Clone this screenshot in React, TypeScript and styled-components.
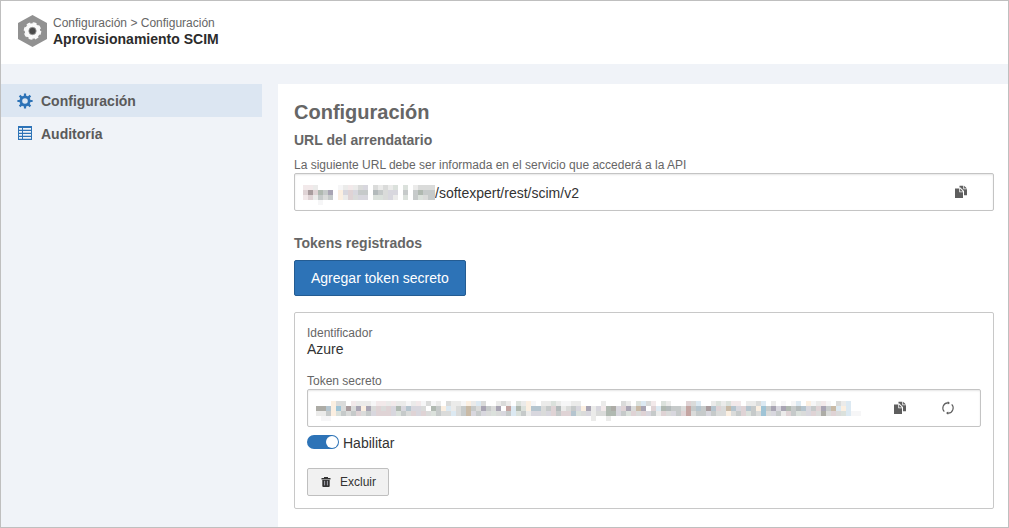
import React, { useState } from 'react';
import styled, { createGlobalStyle } from 'styled-components';

const GlobalStyle = createGlobalStyle`
  *, *::before, *::after { box-sizing: border-box; }
  body {
    margin: 0;
    font-family: 'Liberation Sans', Arial, sans-serif;
    font-size: 14px;
    line-height: 16px;
    color: #333;
    background: #f0f3f8;
  }
  h1, h2, h3, p { margin: 0; }
  button, input { font-family: inherit; }
`;

const Page = styled.div`
  display: flex;
  flex-direction: column;
  min-height: 100vh;
  border: 1px solid #bfbfbf;
`;

const Header = styled.header`
  display: flex;
  align-items: center;
  gap: 6px;
  padding: 14px 17px 17px;
  background: #fff;
`;

const Breadcrumb = styled.nav`
  font-size: 12px;
  color: #666;
  a { color: inherit; text-decoration: none; }
`;

const PageTitle = styled.h1`
  font-size: 14px;
  line-height: 16px;
  color: #2b2b2b;
`;

const Body = styled.div`
  display: flex;
  flex: 1;
  gap: 16px;
  padding-top: 20px;
`;

const Sidebar = styled.nav`
  flex: 0 0 261px;
`;

const SideLink = styled.a<{ $active?: boolean }>`
  display: flex;
  align-items: center;
  gap: 8px;
  height: 33px;
  padding: 0 16px;
  font-weight: bold;
  color: #5a5a5a;
  text-decoration: none;
  background: ${({ $active }) => ($active ? '#dce6f2' : 'transparent')};
`;

const Main = styled.main`
  flex: 1;
  min-width: 0;
  padding: 16px 14px 18px 16px;
  background: #fff;
`;

const Title = styled.h2`
  margin-bottom: 8px;
  font-size: 20px;
  line-height: 24px;
  color: #666;
`;

const SectionTitle = styled.h3`
  margin-bottom: 8px;
  font-size: 14px;
  line-height: 17px;
  color: #666;
`;

const Section = styled.section`
  margin-bottom: 24px;
`;

const Label = styled.label`
  display: block;
  font-size: 12px;
  line-height: 16px;
  color: #666;
`;

const Field = styled.div`
  display: flex;
  align-items: center;
  height: 38px;
  padding: 0 8px;
  border: 1px solid #c4c4c4;
  border-radius: 2px;
  background: #fff;
  box-shadow: inset 0 1px 2px rgba(0, 0, 0, 0.1);
`;

const FieldInput = styled.input`
  flex: 1;
  min-width: 0;
  padding: 2px 0 0;
  border: 0;
  outline: 0;
  background: transparent;
  font-size: 14px;
  color: #333;
`;

const IconButton = styled.button`
  display: flex;
  flex: 0 0 48px;
  align-items: center;
  justify-content: center;
  height: 36px;
  padding: 0;
  border: 0;
  background: transparent;
  color: #5e5e5e;
  cursor: pointer;
`;

const PrimaryButton = styled.button`
  height: 36px;
  padding: 0 16px;
  border: 1px solid #245c92;
  border-radius: 2px;
  background: #2d73b7;
  color: #fff;
  font-size: 14px;
  cursor: pointer;
`;

const Card = styled.article`
  margin-top: 16px;
  padding: 12px;
  border: 1px solid #c8c8c8;
  border-radius: 2px;
`;

const Group = styled.div`
  margin-bottom: 16px;
`;

const ToggleRow = styled.label`
  display: flex;
  align-items: flex-start;
  gap: 4px;
  margin: 8px 0 17px;
`;

const Toggle = styled.input`
  appearance: none;
  display: flex;
  align-items: center;
  width: 32px;
  height: 14px;
  margin: 0;
  padding: 1px;
  border-radius: 7px;
  background: #aaa;
  cursor: pointer;

  &::before {
    content: '';
    width: 12px;
    height: 12px;
    border-radius: 50%;
    background: #fff;
  }
  &:checked {
    justify-content: flex-end;
    background: #2d73b7;
  }
`;

const SecondaryButton = styled.button`
  display: flex;
  align-items: center;
  gap: 8px;
  height: 28px;
  padding: 0 12px;
  border: 1px solid #bfbfbf;
  border-radius: 2px;
  background: #f1f1f1;
  color: #333;
  font-size: 12px;
  cursor: pointer;
`;

const MaskSvg = styled.svg`
  display: block;
  flex: none;
`;

// Each letter is one cell of the pixelated text; a dot is an empty cell.
const maskColors: Record<string, string> = {
  w: '#f6f6f7', l: '#ebebea', g: '#dadbda', d: '#c6caca', k: '#adaca6',
  r: '#dfd3d5', P: '#a99c9e', p: '#c4a5a2', b: '#dce9f2', B: '#b5c5cf',
  s: '#9fc4d6', v: '#d8d7de', V: '#a9a5b4', y: '#fbefe1', t: '#c9baa6',
  e: '#dbe1dc', E: '#b0b9b1', z: '#f2e9ea', m: '#b3babb',
};

const urlMask = [
  'zzl....wlzlgv.glgle.e.lgggg',
  'rPrEdV.yvrvdd.mdgvv.d.dEddd',
  'zrldgd.ylrgvv.eegvl.e.degdd',
  '...w.......................',
];

const tokenMask = [
  '...ygg.zlllwzzlzllwlzwgwl.gllwylbg..' +
    'lgl.elyw.llelwwll....l...gl.ebgz.el.' +
    '..rgb..lelezz.llgb.l.w.wb.ywlzw.glb..',
  'kkBysgPgVyVgrgrvEvBvvg.EdyblgdtdgVdg' +
    'V.pbEeyBBgdrmlgdvyVlvzEkvrVgtV.rbEmd' +
    'dgpdBdPBrgtBvrBdysdVvVEdmBvdrVdtbyb..',
  'lldyedgdrgdvrrrvedgrvrgedggbgdtvdvge' +
    'gvdbedlvvgvrdrrBegvlggEEvdergrvdlrgv' +
    'drpgddvdggygdredgsgvdlrdegvrgkgrgebww',
  '.ww....................................................l..l',
];

const CELL = 5;
const BASELINE_PAD = 6;

const PixelMask = ({ rows, width }: { rows: string[]; width: number }) => (
  <MaskSvg
    width={width}
    height={rows.length * CELL + BASELINE_PAD}
    viewBox={`0 ${-BASELINE_PAD} ${width} ${rows.length * CELL + BASELINE_PAD}`}
    shapeRendering="crispEdges"
    aria-hidden="true"
  >
    {rows.flatMap((row, y) =>
      row.split('').map((code, x) =>
        code === '.' ? null : (
          <rect key={`${x}-${y}`} x={x * CELL} y={y * CELL} width={CELL} height={CELL} fill={maskColors[code]} />
        ),
      ),
    )}
  </MaskSvg>
);

const HexGearIcon = () => (
  <svg width="29" height="32" viewBox="0 0 29 32" aria-hidden="true">
    <path d="M14.5 0 29 8v16l-14.5 8L0 24V8z" fill="#919191" />
    <circle cx="14.5" cy="16" r="7.8" fill="#fafafa" />
    <circle cx="14.5" cy="16" r="8" fill="none" stroke="#fafafa" strokeWidth="1.6" strokeDasharray="3.8 2.483" />
    <circle cx="14.5" cy="16" r="3.7" fill="#4a4a4a" stroke="#a0a0a0" strokeWidth=".8" />
  </svg>
);

const GearIcon = () => (
  <svg width="16" height="16" viewBox="0 0 16 16" fill="none" stroke="#2d73b7" aria-hidden="true">
    <circle cx="8" cy="8" r="4.2" strokeWidth="2.8" />
    <path d="M8 .4v3M8 12.600v3M.4 8h3M12.600 8h3M2.600 2.600l2 2M11.400 11.400l2 2M2.600 13.400l2-2M11.400 4.600l2-2" strokeWidth="2.2" />
  </svg>
);

const TableIcon = () => (
  <svg width="16" height="16" viewBox="0 0 16 16" aria-hidden="true">
    <path d="M1 0h14v14H1z" fill="#2d73b7" />
    <path
      d="M2 2h3v1.700H2zM6 2h8v1.700H6zM2 5h3v1.700H2zM6 5h8v1.700H6zM2 8h3v1.700H2zM6 8h8v1.700H6zM2 11h3v1.700H2zM6 11h8v1.700H6z"
      fill="#f0f3f8"
    />
  </svg>
);

const CopyIcon = () => (
  <svg width="14" height="14" viewBox="0 0 14 14" fill="currentColor" aria-hidden="true">
    <path d="M5.500.7H9.300v3.600H13V10.200H10V6L6.500 2.600 5.500 2.600z" />
    <path d="M10.100.7 13 3.500h-2.900z" />
    <path d="M1 3.500h4.300v3.700H9V13H1z" />
    <path d="M6.100 3.600 9 6.400H6.100z" />
  </svg>
);

const RefreshIcon = () => (
  <svg width="14" height="14" viewBox="0 0 14 14" fill="none" stroke="currentColor" strokeWidth="1.1" aria-hidden="true">
    <path d="M3.300 10.700A5.200 5.200 0 0 1 6.500 1.900h1.300M10.700 3.300a5.200 5.200 0 0 1-3.200 8.800H6.200" />
    <path d="M6.800.2v3.400L9 1.900zM7.200 10.400v3.400L5 12.100z" fill="currentColor" stroke="none" />
  </svg>
);

const TrashIcon = () => (
  <svg width="12" height="12" viewBox="0 0 12 12" aria-hidden="true">
    <path d="M4 2V1h4v1h2.500v1.500h-9V2zM2.300 4h7.400v6q0 1-1 1H3.300q-1 0-1-1z" fill="#333" />
    <path d="M4.600 4.800v4.600M7.400 4.800v4.600" stroke="#a5a5b0" />
  </svg>
);

export default function App() {
  const [enabled, setEnabled] = useState(true);

  return (
    <>
      <GlobalStyle />
      <Page>
        <Header>
          <HexGearIcon />
          <div>
            <Breadcrumb>
              <a href="#configuracion">Configuración</a> &gt; <a href="#configuracion">Configuración</a>
            </Breadcrumb>
            <PageTitle>Aprovisionamiento SCIM</PageTitle>
          </div>
        </Header>
        <Body>
          <Sidebar>
            <SideLink href="#configuracion" $active aria-current="page">
              <GearIcon />
              Configuración
            </SideLink>
            <SideLink href="#auditoria">
              <TableIcon />
              Auditoría
            </SideLink>
          </Sidebar>
          <Main>
            <Title>Configuración</Title>
            <Section>
              <SectionTitle>URL del arrendatario</SectionTitle>
              <Label htmlFor="tenant-url">La siguiente URL debe ser informada en el servicio que accederá a la API</Label>
              <Field>
                <PixelMask rows={urlMask} width={132} />
                <FieldInput id="tenant-url" readOnly value="/softexpert/rest/scim/v2" />
                <IconButton type="button" aria-label="Copiar URL">
                  <CopyIcon />
                </IconButton>
              </Field>
            </Section>
            <section>
              <SectionTitle>Tokens registrados</SectionTitle>
              <PrimaryButton type="button">Agregar token secreto</PrimaryButton>
              <Card>
                <Group>
                  <Label as="div">Identificador</Label>
                  <p>Azure</p>
                </Group>
                <Label htmlFor="secret-token">Token secreto</Label>
                <Field>
                  <PixelMask rows={tokenMask} width={545} />
                  <FieldInput id="secret-token" readOnly value="" />
                  <IconButton type="button" aria-label="Copiar token">
                    <CopyIcon />
                  </IconButton>
                  <IconButton type="button" aria-label="Renovar token">
                    <RefreshIcon />
                  </IconButton>
                </Field>
                <ToggleRow>
                  <Toggle type="checkbox" checked={enabled} onChange={(e) => setEnabled(e.target.checked)} />
                  Habilitar
                </ToggleRow>
                <SecondaryButton type="button">
                  <TrashIcon />
                  Excluir
                </SecondaryButton>
              </Card>
            </section>
          </Main>
        </Body>
      </Page>
    </>
  );
}
